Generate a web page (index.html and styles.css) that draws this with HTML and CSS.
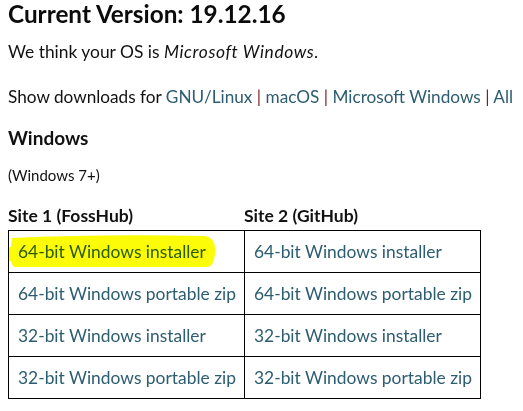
FILE: index.html
```html
<!DOCTYPE html>
<html>
<head>
<meta charset="utf-8">
<link rel="stylesheet" href="styles.css">
</head>
<body>
<h1 class="title">Current Version: 19.12.16</h1>
<p class="os">We think your OS is <em>Microsoft Windows.</em></p>
<p class="show">Show downloads for <a href="#">GNU/Linux</a> <span class="sep">|</span> <a href="#">macOS</a> <span class="sep">|</span> <a href="#">Microsoft Windows</a> <span class="sep">|</span> <a href="#">All</a></p>
<h2 class="platform">Windows</h2>
<p class="req">(Windows 7+)</p>
<div class="sites">
  <div class="sitehead">Site 1 (FossHub)</div>
  <div class="sitehead">Site 2 (GitHub)</div>
</div>
<div class="tablewrap">
  <table class="dl">
    <colgroup><col class="c"><col class="c"></colgroup>
    <tr><td><a href="#">64-bit Windows installer</a></td><td><a href="#">64-bit Windows installer</a></td></tr>
    <tr><td><a href="#">64-bit Windows portable zip</a></td><td><a href="#">64-bit Windows portable zip</a></td></tr>
    <tr><td><a href="#">32-bit Windows installer</a></td><td><a href="#">32-bit Windows installer</a></td></tr>
    <tr><td><a href="#">32-bit Windows portable zip</a></td><td><a href="#">32-bit Windows portable zip</a></td></tr>
  </table>
  <svg class="marker" width="230" height="44" viewBox="0 0 230 44">
    <path d="M0,21 L4,19 L11,18 L12,9 Q100,5 205,7 Q216,9 215,22 Q215,36 208,38 L14,38 Q11,34 11,32 L3,33 L0,33 Z" fill="#fcfc08"/>
  </svg>
</div>
</body>
</html>
```
FILE: styles.css
```css
body {
  margin: 0 8px;
  font-family: Lato, "Noto Sans", sans-serif;
  color: #111;
  background: #fff;
}
.title {
  font-size: 24.3px;
  font-weight: 700;
  margin: 0;
  padding-top: 2px;
  line-height: 24px;
  color: #0b0b0b;
}
.os {
  font-size: 17.4px;
  margin: 16px 0 0;
  line-height: 20px;
}
.os em {
  letter-spacing: 0.6px;
}
.show {
  font-size: 17.2px;
  margin: 25px 0 0;
  line-height: 20px;
  white-space: nowrap;
}
a {
  color: #2c5d70;
  text-decoration: none;
}
.sep {
  color: #7a2020;
}
.platform {
  font-size: 19px;
  font-weight: 700;
  margin: 19px 0 0;
  line-height: 24px;
}
.req {
  font-size: 15px;
  margin: 16px 0 0;
  line-height: 18px;
}
.sites {
  display: flex;
  margin-top: 21px;
}
.sitehead {
  width: 236px;
  font-size: 17.5px;
  font-weight: 700;
  line-height: 22px;
}
.tablewrap {
  position: relative;
  width: 473px;
  margin-top: 3px;
}
.dl {
  border-collapse: collapse;
  table-layout: fixed;
  width: 473px;
}
.dl .c {
  width: 236px;
}
.dl td {
  border: 1px solid #000;
  height: 41px;
  padding: 0 0 0 9px;
  font-size: 17.4px;
  vertical-align: middle;
  white-space: nowrap;
}
.marker {
  position: absolute;
  left: -8px;
  top: -1px;
  mix-blend-mode: multiply;
}
```
